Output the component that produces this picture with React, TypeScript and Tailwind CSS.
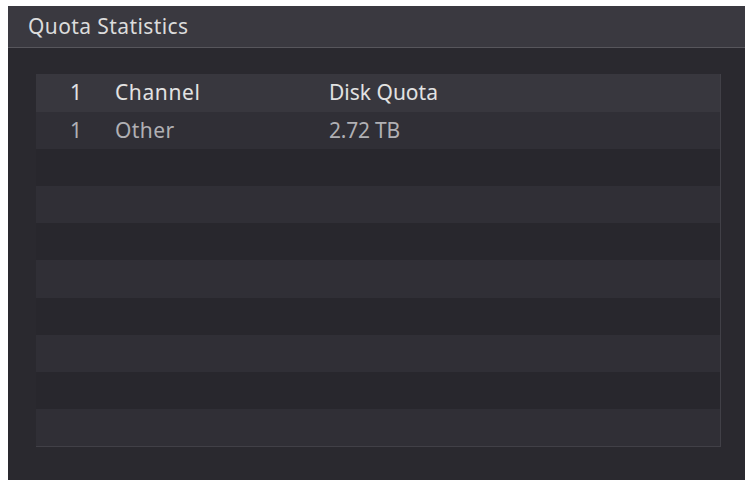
import React from "react";

const rows = Array.from({ length: 9 }, (_, i) => i);

export default function App() {
  return (
    <div
      className="w-[751px] h-[484px] bg-white pt-[6px] pl-[8px]"
      style={{ fontFamily: '"Noto Sans", "Open Sans", sans-serif' }}
    >
      <div className="w-[737px] h-[474px] bg-[#2a292f] flex flex-col">
        <div className="h-[41px] bg-[#3a3940] flex items-center pl-[20px] text-[21px] tracking-[0.4px] text-[#dcdcdc]">
          Quota Statistics
        </div>
        <div className="h-px bg-[#57565c]" />
        <div className="flex-1 pt-[26px] pl-[28px] pr-[24px] pb-[33px]">
          <div className="h-full border-r border-b border-[#414047] flex flex-col">
            <div className="h-[38px] shrink-0 bg-[#38373e] flex items-center text-[21px] text-[#e2e2e2]">
              <span className="w-[79px] pl-[34px]">1</span>
              <span className="w-[214px] tracking-[0.6px]">Channel</span>
              <span>Disk Quota</span>
            </div>
            {rows.map((i) => (
              <div
                key={i}
                className={
                  "flex-1 flex items-center text-[21px] text-[#b0b0b4] " +
                  (i % 2 === 0 ? "bg-[#302f36]" : "bg-[#28272d]")
                }
              >
                {i === 0 && (
                  <>
                    <span className="w-[79px] pl-[34px]">1</span>
                    <span className="w-[214px] tracking-[0.4px]">Other</span>
                    <span className="tracking-[-0.2px]">2.72 TB</span>
                  </>
                )}
              </div>
            ))}
          </div>
        </div>
      </div>
    </div>
  );
}
